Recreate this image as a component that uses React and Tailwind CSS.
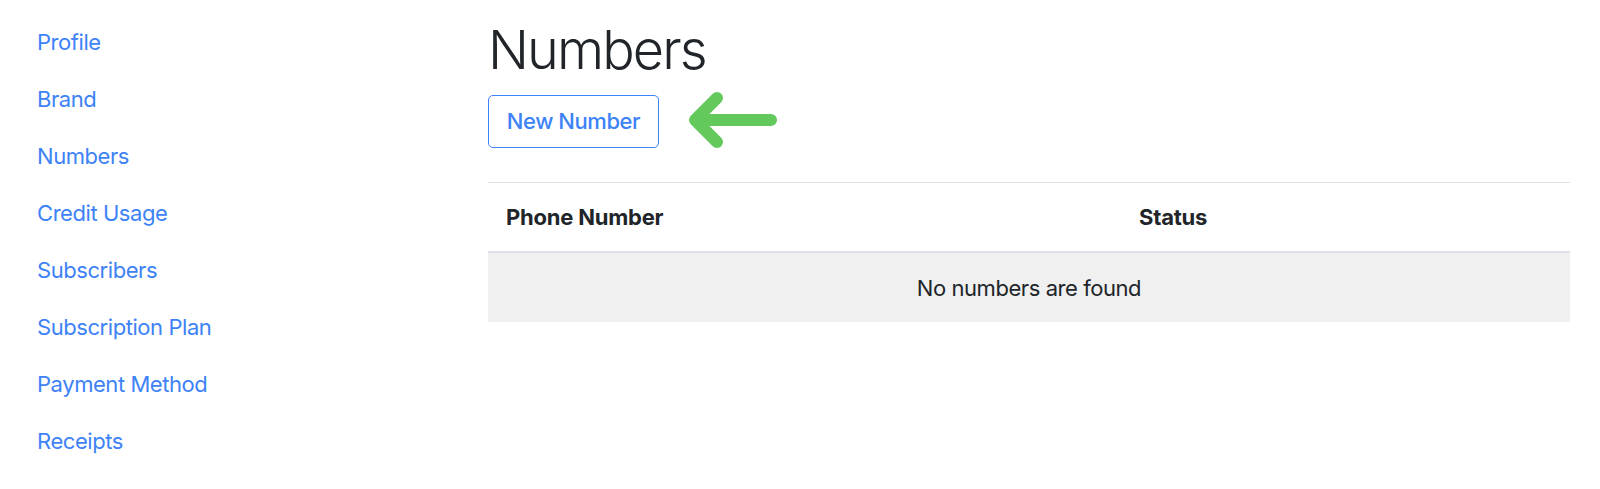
export default function App() {
  const links = [
    "Profile",
    "Brand",
    "Numbers",
    "Credit Usage",
    "Subscribers",
    "Subscription Plan",
    "Payment Method",
    "Receipts",
  ];
  return (
    <div
      className="flex min-h-[489px] w-[1600px] bg-white"
      style={{ fontFamily: "Inter, 'Liberation Sans', sans-serif" }}
    >
      <nav className="flex w-[488px] shrink-0 flex-col pl-[37px] pt-[14px]">
        {links.map((l) => (
          <a
            key={l}
            href="#"
            className="flex h-[57px] items-center text-[22px] tracking-[-0.02em] text-[#3d82f6]"
          >
            {l}
          </a>
        ))}
      </nav>
      <main className="w-[1082px] shrink-0 pt-[23px]">
        <h1 className="text-[54px] font-light leading-none tracking-[-0.035em] text-[#212529]">
          Numbers
        </h1>
        <div className="mt-[9px] flex items-center gap-[21px]">
          <button className="h-[53px] w-[171px] rounded-[5px] border border-[#3d82f6] text-[22px] font-medium tracking-[-0.02em] text-[#3d82f6]">
            New Number
          </button>
          <svg width="100" height="70" viewBox="0 0 100 70" className="block">
            <path
              d="M91 34 H16 M37 12 L15 34 L37 56"
              fill="none"
              stroke="#63c95c"
              strokeWidth="12"
              strokeLinecap="round"
              strokeLinejoin="round"
            />
          </svg>
        </div>
        <div className="mt-[26px]">
          <div className="flex h-[71px] items-center border-t border-b-2 border-[#dee2e6] text-[22px] font-bold tracking-[-0.01em] text-[#212529]">
            <div className="w-[633px] pl-[18px]">Phone Number</div>
            <div className="pl-[18px]">Status</div>
          </div>
          <div className="flex h-[69px] items-center justify-center bg-[#f0f0f0] pt-[2px] text-[22px] tracking-[-0.02em] text-[#212529]">
            No numbers are found
          </div>
        </div>
      </main>
    </div>
  );
}
